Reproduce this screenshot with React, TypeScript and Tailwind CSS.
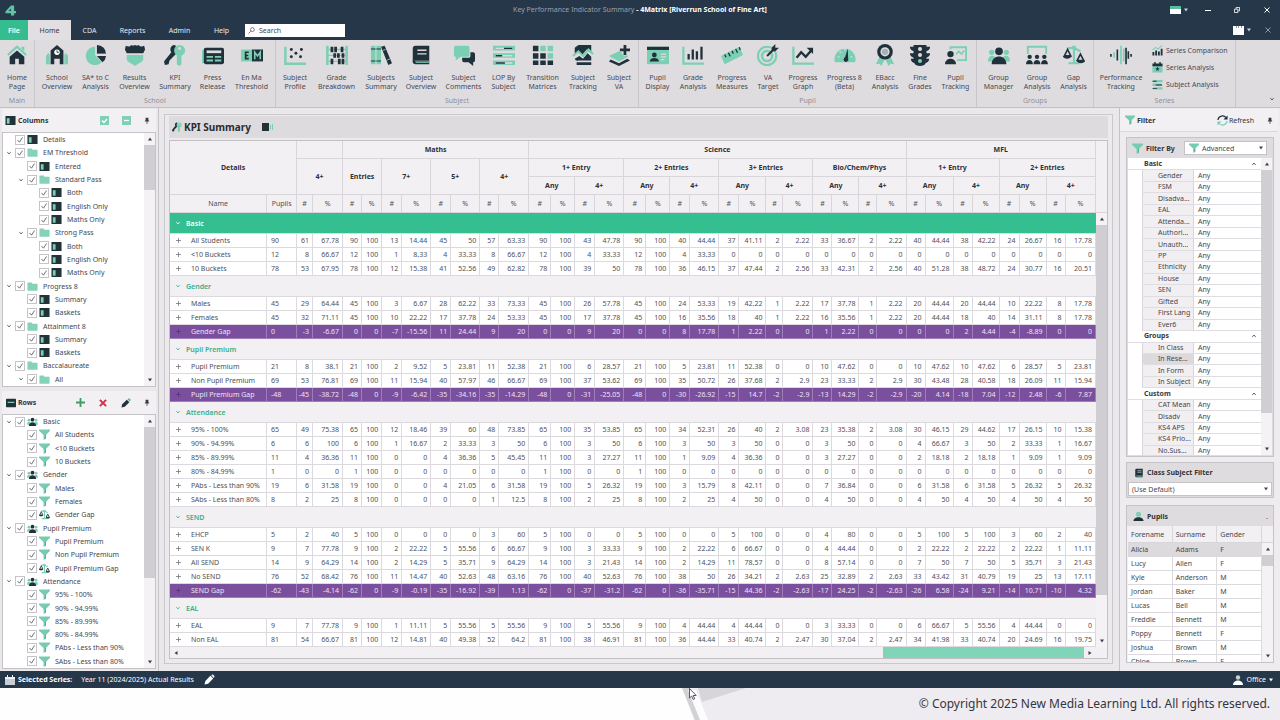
import { Fragment, useState } from "react";
import type { ReactNode } from "react";

const D = "#20313c";
const M = "#7bcfb3";

/* ---------- icons ---------- */

const ICONS: Record<string, ReactNode> = {
  home: (
    <>
      <path d="M2 12 12 3l10 9" fill="none" stroke={M} strokeWidth="2.4" />
      <path d="M17 3h3v5l-3-3z" fill={M} />
      <path d="M12 7 4 14v8h6v-6h4v6h6v-8z" fill={D} />
    </>
  ),
  school: (
    <>
      <path d="M0 12h4v10H0zM20 12h4v10h-4z" fill={M} />
      <path d="M1.500 10h2v12h-2zM20.500 10h2v12h-2z" fill={M} />
      <path d="M12 1 5 7v15h4v-6h6v6h4V7z" fill={D} />
      <circle cx="12" cy="9" r="3" fill="#fff" />
      <path d="M12 7v2h2" fill="none" stroke={D} strokeWidth="1" />
    </>
  ),
  pie: (
    <>
      <path d="M11 3a10 10 0 1 0 7 17l-7-8z" fill={M} />
      <path d="M13 1v10h10A10 10 0 0 0 13 1z" fill={D} />
      <path d="M13 13l6 7a10 10 0 0 0 4-7z" fill={D} />
      <path d="M13 11h10" stroke="#dedbdf" strokeWidth="1" />
    </>
  ),
  shield: (
    <>
      <path d="M2 2c3 1 4 1 6-1 1 1 2 1 4 0 2 1 3 1 4 0 2 2 3 2 6 1l1 4-2 4H3L1 6z" fill={D} />
      <path d="M3 12h18v4c0 4-6 5-9 8-3-3-9-4-9-8z" fill={M} />
    </>
  ),
  keys: (
    <>
      <path d="M11 1a5 5 0 0 0-3 8l-8 10 1 4 4-1 1-4 7-7V2z" fill={D} />
      <circle cx="17" cy="7" r="6" fill={M} />
      <path d="M14 10h5v12l-2 2-3-2z" fill={M} />
      <circle cx="17" cy="5" r="1.600" fill="#dedbdf" />
    </>
  ),
  press: (
    <>
      <path d="M0 7h3v14H0z" fill={M} />
      <rect x="2" y="4" width="22" height="18" rx="2" fill={D} />
      <path d="M5 7h16v3H5z" fill="#dedbdf" />
      <path d="M5 13h7v2H5zM14 13h7v2h-7zM5 17h7v2H5zM14 17h7v2h-7z" fill={M} />
    </>
  ),
  enma: (
    <>
      <path d="M0 6h12v13H0z" fill={M} />
      <path d="M12 6h12v13H12z" fill={D} />
      <path d="M8.500 9H5v7h3.500M5 12.500h3" fill="none" stroke={D} strokeWidth="1.800" />
      <path d="M15 16.500V9l3 4 3-4v7.500" fill="none" stroke={M} strokeWidth="1.800" />
    </>
  ),
  scatter: (
    <>
      <path d="M1.500 3v18.500H24" fill="none" stroke={M} strokeWidth="2.600" />
      <g fill={D}>
        <circle cx="8" cy="6" r="1.600" />
        <circle cx="13" cy="10" r="1.600" />
        <circle cx="19" cy="6" r="1.600" />
        <circle cx="8" cy="14" r="1.600" />
        <circle cx="18" cy="14" r="1.600" />
      </g>
    </>
  ),
  abacus: (
    <>
      <path d="M1.500 2v21M22.500 2v21" stroke={M} strokeWidth="2.800" />
      <path d="M2 6h20M2 12.500h20M2 19h20" stroke={M} strokeWidth="1.400" />
      <path d="M5 3h3v6H5zM9 3h3v6H9zM16 3h3v6h-3zM5 16h3v6H5zM13 16h3v6h-3zM17 16h3v6h-3zM8 10h3v5H8zM12 10h3v5h-3zM17 10h3v5h-3z" fill={D} />
    </>
  ),
  books: (
    <>
      <path d="M1 2h5v20H1zM7 2h5v20H7z" fill={M} />
      <path d="M1 5h5v1H1zM1 18h5v1H1zM7 5h5v1H7zM7 18h5v1H7z" fill={D} />
      <path d="M12 3l4-1 8 19-4 2z" fill={D} />
      <path d="M14 7l3-1M18 18l4-2" stroke={M} strokeWidth="1" />
    </>
  ),
  book: (
    <>
      <path d="M6 2h15v16H6a3 3 0 0 0-3 2V5a3 3 0 0 1 3-3z" fill={D} />
      <path d="M3 18h18v4H6a3 3 0 0 1-3-3z" fill={D} />
      <path d="M6 19h15v1.500H6z" fill={M} />
      <path d="M8 6h10v1.500H8zM8 10h10v1.500H8z" fill="#dedbdf" />
    </>
  ),
  comments: (
    <>
      <path d="M2 2h14a2 2 0 0 1 2 2v8a2 2 0 0 1-2 2H8l-5 4v-4a2 2 0 0 1-2-2V4z" fill={M} />
      <path d="M19 9h3a2 2 0 0 1 2 2v7a2 2 0 0 1-2 2v4l-5-4h-5a2 2 0 0 1-2-2v-3h7a2 2 0 0 0 2-2z" fill={D} />
    </>
  ),
  lop: (
    <>
      <path d="M0 2h24v5H0zM0 10h24v5H0zM0 18h24v5H0z" fill={M} />
      <path d="M3 4h18v1.500H3zM3 12h18v1.500H3zM3 20h18v1.500H3z" fill="#dedbdf" />
      <path d="M12 4h9v1.500h-9zM3 12h7v1.500H3zM3 20h10v1.500H3z" fill={D} />
    </>
  ),
  matrix: (
    <>
      <path d="M1 2h6v6H1zM1 10h6v6H1zM9 10h6v6H9zM1 18h6v5H1zM9 18h6v5H9zM17 18h6v5h-6z" fill={D} />
      <path d="M9 2h6v6H9zM17 2h6v6h-6zM17 10h6v6h-6z" fill={M} />
    </>
  ),
  tracking: (
    <>
      <path d="M7 1h14v9l-5-4-5 6-4-3-4 3V4z" fill={D} />
      <path d="M21 14v4H7a3 3 0 0 1-4-2l5-3 4 3 5-6zM5 20h16v3H5z" fill={D} />
      <path d="M1 13l6-5 5 5 6-7 5 5" fill="none" stroke={M} strokeWidth="2.200" />
    </>
  ),
  layers: (
    <>
      <path d="M17 1h3v4h4v3h-4v4h-3V8h-4V5h4z" fill={D} />
      <path d="M12 8h3v3l3 2 3-1 1 2-10 5L1 13z" fill={M} />
      <path d="M3 17l9 4 9-5 3 2-12 6-11-5z" fill={D} />
    </>
  ),
  idcard: (
    <>
      <path d="M0 3h24v19H0z" fill={M} />
      <path d="M0 3h24v3.500H0z" fill={D} />
      <circle cx="8" cy="12" r="2.600" fill={D} />
      <path d="M3 19c0-5 10-5 10 0z" fill={D} />
      <path d="M15 11h6M15 14h6M15 17h4" stroke="#dedbdf" strokeWidth="1.300" />
    </>
  ),
  bars: (
    <>
      <path d="M1.500 3v18.500H24" fill="none" stroke={M} strokeWidth="2.400" />
      <path d="M6 11h2.500v6H6zM10.500 6H13v11h-2.500zM15 8h2.500v9H15zM20 3h2.500v14H20z" fill={D} />
    </>
  ),
  ruler: (
    <>
      <path d="M0 13 20 3l4 9L4 22z" fill={M} />
      <path d="M4 11.500l1.500 3M8 9.500l2 4M12 7.500l1.500 3M16 5.500l2 4M20 3.500l1 3" stroke={D} strokeWidth="1.400" />
    </>
  ),
  target: (
    <>
      <circle cx="11" cy="13" r="10" fill="none" stroke={M} strokeWidth="2.400" />
      <circle cx="11" cy="13" r="5.500" fill="none" stroke={M} strokeWidth="2.800" />
      <path d="M11 13 18 6" stroke={D} strokeWidth="2.200" />
      <path d="M16 8V4l4-4v4h4l-4 4z" fill={D} />
    </>
  ),
  graph: (
    <>
      <path d="M1.500 3v18.500H24" fill="none" stroke={M} strokeWidth="2.400" />
      <path d="M5 15l5-6 5 5 6-7" fill="none" stroke={D} strokeWidth="2.600" />
      <path d="M16 4h7v7z" fill={D} />
    </>
  ),
  gauge: (
    <>
      <path d="M1 20a11.500 11.500 0 1 1 22 0z" fill={M} />
      <path d="M11 18l4-13 .5 13z" fill={D} />
      <circle cx="13" cy="17" r="2.500" fill={D} />
      <path d="M4 14h2M6 8l1.500 1.500M12 5v2M20 14h-2" stroke="#dedbdf" strokeWidth="1.400" />
    </>
  ),
  rosette: (
    <>
      <path d="M6 14 2 22l4-.5 2 2.500 4-8 4 8 2-2.500 4 .5-4-8z" fill={M} />
      <circle cx="12" cy="8.500" r="8.500" fill={D} />
      <circle cx="12" cy="8.500" r="5" fill="#dedbdf" />
      <circle cx="12" cy="8.500" r="3.400" fill="#9fb4b4" />
    </>
  ),
  lights: (
    <>
      <path d="M5 1h14v2h4c0 3-2 4-4 5v2h4c0 3-2 4-4 5v1h3c0 3-2 4-4 5-1 4-11 4-12 0-2-1-4-2-4-5h3v-1c-2-1-4-2-4-5h4V8C3 7 1 6 1 3h4z" fill={D} />
      <circle cx="12" cy="5.500" r="2.200" fill="#dedbdf" />
      <circle cx="12" cy="12" r="2.200" fill="#dedbdf" />
      <circle cx="12" cy="18.500" r="2.200" fill={M} />
    </>
  ),
  teach: (
    <>
      <path d="M6 6V3.500h17v14H13" fill="none" stroke={M} strokeWidth="2" />
      <path d="M12 11l3-3 3 3 3-4" fill="none" stroke={M} strokeWidth="1.800" />
      <circle cx="6" cy="11" r="3.500" fill={D} />
      <path d="M0 22c0-8 12-8 12 0z" fill={D} />
    </>
  ),
  groupManager: (
    <>
      <circle cx="4" cy="9" r="2.800" fill={M} />
      <circle cx="20" cy="9" r="2.800" fill={M} />
      <path d="M0 19c0-8 7-7 8-4v4zM24 19c0-8-7-7-8-4v4z" fill={M} />
      <circle cx="12" cy="8" r="4.200" fill={D} />
      <path d="M4 22c0-11 16-11 16 0z" fill={D} />
    </>
  ),
  groupAnalysis: (
    <>
      <path d="M2 11V3h20v8" fill="none" stroke={M} strokeWidth="2" />
      <g fill={D}>
        <circle cx="4" cy="14" r="2.400" />
        <circle cx="12" cy="14" r="2.400" />
        <circle cx="20" cy="14" r="2.400" />
        <path d="M0 22c0-6 7.500-6 7.500 0zM8.200 22c0-6 7.500-6 7.500 0zM16.400 22c0-6 7.500-6 7.500 0z" />
      </g>
    </>
  ),
  scales: (
    <>
      <path d="M12 3v17M6 21h12M4 5l7-1 8 4" fill="none" stroke={M} strokeWidth="2.400" />
      <circle cx="12" cy="4" r="2.400" fill={M} />
      <path d="M5 6 1.500 13h7zM19 11l-3.500 7h7z" fill="none" stroke={D} strokeWidth="1.800" />
      <path d="M0 13h9c0 4-9 4-9 0zM15 18h9c0 4-9 4-9 0z" fill={D} />
    </>
  ),
  wave: (
    <>
      <path d="M1 11v3M23 11v3M8 6v12M20 8v8" stroke={D} strokeWidth="1.800" />
      <path d="M4.500 9v6M12 2v20M15 5v14" stroke={M} strokeWidth="1.800" />
      <path d="M17.500 4v18" stroke={D} strokeWidth="1.800" />
    </>
  ),
  comparison: (
    <>
      <path d="M1 11 8 5l5 4 9-8" fill="none" stroke={M} strokeWidth="2.200" />
      <path d="M1 15h4v8H1zM7 12h4v11H7zM13 14h4v9h-4zM19 8h4v15h-4z" fill={D} />
    </>
  ),
  calendar: (
    <>
      <path d="M1 8h22v15H1z" fill={M} />
      <path d="M1 3h22v6H1zM5 0h3v4H5zM16 0h3v4h-3z" fill={D} />
      <path d="m12 10 1.500 3.500H17l-3 2.300 1 3.700-3-2-3 2 1-3.700-3-2.300h3.500z" fill={D} />
    </>
  ),
  subjectRows: (
    <>
      <path d="M3 2h20v5H3zM1 10h20v5H1zM3 18h20v5H3z" fill={M} />
      <path d="M1 4h9v2H1zM8 12h14v2H8zM1 20h10v2H1z" fill={D} />
    </>
  ),
  column: (
    <>
      <rect x="1" y="2" width="22" height="20" rx="1" fill="#213338" />
      <path d="M4 7h6v12H4z" fill={M} />
    </>
  ),
  rowsPanel: (
    <>
      <rect x="0" y="2" width="24" height="20" rx="1" fill="#213338" />
      <path d="M4 9h16v3H4z" fill={M} />
    </>
  ),
  folder: <path d="M1 3h9l2 3h11v15H1z" fill="#84d3b8" />,
  funnel: (
    <>
      <path d="M0 1h24v3l-9 9v8l-5 3V13L0 4z" fill="#76cbb0" />
      <path d="M15 13v8l-2 1V12z" fill="#4fae93" />
    </>
  ),
  pupil: (
    <>
      <circle cx="12" cy="7" r="5.500" fill={M} />
      <path d="M1 22c0-11 22-11 22 0z" fill={D} />
    </>
  ),
  refresh: (
    <>
      <path d="M2 11A10 10 0 0 1 20 6" fill="none" stroke={D} strokeWidth="2.600" />
      <path d="M23 1v9h-9z" fill={D} />
      <path d="M22 13A10 10 0 0 1 4 18" fill="none" stroke={M} strokeWidth="2.600" />
      <path d="M1 23v-9h9z" fill={M} />
    </>
  ),
};

function Icon({ name, className }: { name: string; className: string }) {
  return (
    <svg viewBox="0 0 24 24" className={`shrink-0 ${className}`} aria-hidden="true">
      {ICONS[name]}
    </svg>
  );
}

function Chevron({ up = false, className = "" }: { up?: boolean; className?: string }) {
  return (
    <svg viewBox="0 0 6 6" className={`h-[6px] w-[6px] shrink-0 ${className}`} aria-hidden="true">
      <path d={up ? "M1.300 3.800 3 2.200l1.700 1.600" : "M1.300 2.200 3 3.800l1.700-1.600"} fill="none" stroke="currentColor" strokeWidth=".9" />
    </svg>
  );
}

function Arrow({ dir, className = "" }: { dir: "up" | "down" | "left" | "right"; className?: string }) {
  const shapes = { up: "M1 4.500h4L3 1.500z", down: "M1 1.500h4L3 4.500z", left: "M4.500 1v4L1.500 3z", right: "M1.500 1v4l3-2z" };
  return (
    <svg viewBox="0 0 6 6" className={`h-[6px] w-[6px] shrink-0 ${className}`} aria-hidden="true">
      <path d={shapes[dir]} fill="currentColor" />
    </svg>
  );
}

function Pin() {
  return (
    <button aria-label="Pin panel" className="text-[#3b3b42]">
      <svg viewBox="0 0 8 10" className="h-[7px] w-[6px]">
        <path d="M2 1h4v4h1v1.500H1V5h1zM3.500 6.500h1V10h-1z" fill="currentColor" />
      </svg>
    </button>
  );
}

function Pencil({ className, tip, body }: { className: string; tip: string; body: string }) {
  return (
    <svg viewBox="0 0 24 24" className={className} aria-hidden="true">
      <path d="M1 23l2-8L14 4l6 6L9 21z" fill={body} />
      <path d="M15.500 3 18 1c2-1 6 3 5 5l-2 2.500z" fill={tip} />
    </svg>
  );
}

/* ---------- title bar and tabs ---------- */

function TitleBar() {
  return (
    <header className="relative flex h-[20px] items-center justify-between pr-[10px] pl-[5px]">
      <svg viewBox="0 0 24 24" className="h-[11px] w-[11px]" aria-label="4Matrix logo">
        <path d="M13 1h7v12h4v5h-4v5h-7v-5H1v-4zM13 8l-5 5h5z" fill="#5fc3a5" fillRule="evenodd" />
      </svg>
      <h1 className="absolute inset-x-0 text-center text-[7px] leading-[20px] font-normal text-[#98a1ae]">
        Key Performance Indicator Summary <strong className="font-bold text-white">- 4Matrix [Riverrun School of Fine Art]</strong>
      </h1>
      <div className="relative flex items-center text-white">
        <button aria-label="Layout" className="flex items-center gap-[2px]">
          <svg viewBox="0 0 11 8" className="h-[8px] w-[11px]">
            <path d="M0 0h11v8H0z" fill="#fff" />
            <path d="M0 0h11v3H0z" fill="#5cb9a0" />
          </svg>
          <Arrow dir="down" className="text-[#c8ced6]" />
        </button>
        <button aria-label="Minimise" className="mb-[4px] ml-[16px] h-[5px] w-[6px] border-b border-white" />
        <button aria-label="Restore" className="ml-[23px]">
          <svg viewBox="0 0 7 7" className="h-[6px] w-[6px]" fill="none" stroke="currentColor">
            <path d="M.5 2.500h4v4h-4zM2.500 2V.5h4v4H5" />
          </svg>
        </button>
        <button aria-label="Close" className="ml-[24px]">
          <svg viewBox="0 0 6 6" className="h-[6px] w-[6px]" stroke="currentColor">
            <path d="M.5.5l5 5M5.500.5l-5 5" />
          </svg>
        </button>
      </div>
    </header>
  );
}

function Tabs() {
  const tabs = [
    { label: "CDA", w: "w-[37px]" },
    { label: "Reports", w: "w-[49px]" },
    { label: "Admin", w: "w-[45px]" },
    { label: "Help", w: "w-[39px]" },
  ];
  return (
    <nav className="flex h-[20px] items-center pr-[9px] text-[7px] text-[#e6e9ed]">
      <button className="h-full w-[28px] bg-[#35bd90] font-semibold text-white">File</button>
      <button className="h-full w-[43px] bg-[#e2dfe3] text-[#36383f]">Home</button>
      {tabs.map((t) => (
        <button key={t.label} className={`h-full ${t.w}`}>
          {t.label}
        </button>
      ))}
      <label className="ml-[4px] flex h-[13px] w-[100px] items-center bg-white pl-[3px]">
        <svg viewBox="0 0 8 8" className="h-[7px] w-[7px] shrink-0" fill="none" stroke="#44464e">
          <circle cx="5" cy="3" r="2.200" strokeWidth=".8" />
          <path d="M3.300 4.700.5 7.500" strokeWidth=".8" />
        </svg>
        <input
          aria-label="Search"
          placeholder="Search"
          className="ml-[4px] h-full w-full min-w-0 bg-transparent text-[7px] outline-none placeholder:text-[#44464e]"
        />
      </label>
      <div className="ml-auto flex items-center">
        <button aria-label="Window list" className="flex items-center gap-[2px]">
          <svg viewBox="0 0 11 9" className="h-[9px] w-[11px]">
            <path d="M0 0h11v9H0z" fill="#fff" />
            <path d="M3 1h1M5 1h1M8 1h1" stroke="#27374a" />
          </svg>
          <Arrow dir="down" className="text-[#c8ced6]" />
        </button>
        <button aria-label="Close view" className="ml-[13px] text-[#8e98a6]">
          <svg viewBox="0 0 6 6" className="h-[6px] w-[6px]" stroke="currentColor">
            <path d="M.5.5l5 5M5.500.5l-5 5" />
          </svg>
        </button>
      </div>
    </nav>
  );
}

/* ---------- ribbon ---------- */

type Item = { icon: string; lines: [string, string]; w: string };

const RIBBON: { label: string; w: string; items: Item[] }[] = [
  { label: "Main", w: "w-[35px]", items: [{ icon: "home", lines: ["Home", "Page"], w: "w-[34px]" }] },
  {
    label: "School",
    w: "w-[241px]",
    items: [
      { icon: "school", lines: ["School", "Overview"], w: "w-[40px]" },
      { icon: "pie", lines: ["SA* to C", "Analysis"], w: "w-[37px]" },
      { icon: "shield", lines: ["Results", "Overview"], w: "w-[41px]" },
      { icon: "keys", lines: ["KPI", "Summary"], w: "w-[40px]" },
      { icon: "press", lines: ["Press", "Release"], w: "w-[35px]" },
      { icon: "enma", lines: ["En Ma", "Threshold"], w: "w-[43px]" },
    ],
  },
  {
    label: "Subject",
    w: "w-[363px]",
    items: [
      { icon: "scatter", lines: ["Subject", "Profile"], w: "w-[34px]" },
      { icon: "abacus", lines: ["Grade", "Breakdown"], w: "w-[49px]" },
      { icon: "books", lines: ["Subjects", "Summary"], w: "w-[40px]" },
      { icon: "book", lines: ["Subject", "Overview"], w: "w-[40px]" },
      { icon: "comments", lines: ["Subject", "Comments"], w: "w-[45px]" },
      { icon: "lop", lines: ["LOP By", "Subject"], w: "w-[35px]" },
      { icon: "matrix", lines: ["Transition", "Matrices"], w: "w-[43px]" },
      { icon: "tracking", lines: ["Subject", "Tracking"], w: "w-[38px]" },
      { icon: "layers", lines: ["Subject", "VA"], w: "w-[34px]" },
    ],
  },
  {
    label: "Pupil",
    w: "w-[338px]",
    items: [
      { icon: "idcard", lines: ["Pupil", "Display"], w: "w-[34px]" },
      { icon: "bars", lines: ["Grade", "Analysis"], w: "w-[37px]" },
      { icon: "ruler", lines: ["Progress", "Measures"], w: "w-[41px]" },
      { icon: "target", lines: ["VA", "Target"], w: "w-[31px]" },
      { icon: "graph", lines: ["Progress", "Graph"], w: "w-[39px]" },
      { icon: "gauge", lines: ["Progress 8", "(Beta)"], w: "w-[44px]" },
      { icon: "rosette", lines: ["EBacc", "Analysis"], w: "w-[37px]" },
      { icon: "lights", lines: ["Fine", "Grades"], w: "w-[33px]" },
      { icon: "teach", lines: ["Pupil", "Tracking"], w: "w-[38px]" },
    ],
  },
  {
    label: "Groups",
    w: "w-[117px]",
    items: [
      { icon: "groupManager", lines: ["Group", "Manager"], w: "w-[40px]" },
      { icon: "groupAnalysis", lines: ["Group", "Analysis"], w: "w-[37px]" },
      { icon: "scales", lines: ["Gap", "Analysis"], w: "w-[36px]" },
    ],
  },
  {
    label: "Series",
    w: "w-[142px]",
    items: [{ icon: "wave", lines: ["Performance", "Tracking"], w: "w-[54px]" }],
  },
];

const SERIES_LINKS = [
  { icon: "comparison", label: "Series Comparison" },
  { icon: "calendar", label: "Series Analysis" },
  { icon: "subjectRows", label: "Subject Analysis" },
];

function Ribbon() {
  return (
    <div className="flex h-[68px] border-b border-[#c3c0c4] bg-[#dfdce0] text-[7px] text-[#484950]">
      {RIBBON.map((group) => (
        <section key={group.label} className={`flex shrink-0 flex-col border-r border-[#c9c6cb] pt-[4px] ${group.w}`}>
          <div className="flex h-[52px] justify-center">
            {group.items.map((item) => (
              <button key={item.lines.join(" ")} className={`flex shrink-0 flex-col items-center ${item.w}`}>
                <Icon name={item.icon} className="h-[22px] w-[22px]" />
                <span className="mt-[7px] text-center leading-[9px] whitespace-nowrap">
                  {item.lines[0]}
                  <br />
                  {item.lines[1]}
                </span>
              </button>
            ))}
            {group.label === "Series" && (
              <ul className="flex grow flex-col gap-[5px] pl-[4px]">
                {SERIES_LINKS.map((link) => (
                  <li key={link.label}>
                    <button className="flex h-[12px] items-center gap-[3px] whitespace-nowrap">
                      <Icon name={link.icon} className="h-[11px] w-[11px]" />
                      {link.label}
                    </button>
                  </li>
                ))}
              </ul>
            )}
          </div>
          <span className="text-center leading-[9px] text-[#918f96]">{group.label}</span>
        </section>
      ))}
      <button aria-label="Collapse ribbon" className="mt-auto mr-[5px] mb-[5px] ml-auto">
        <Chevron className="text-[#3b3b42]" />
      </button>
    </div>
  );
}

/* ---------- shared bits ---------- */

function VScroll({ thumb, className = "" }: { thumb: string; className?: string }) {
  return (
    <div className={`flex w-[11px] shrink-0 flex-col items-center bg-[#f4f2f5] text-[#3d3d44] ${className}`}>
      <Arrow dir="up" className="my-[3px]" />
      <div className="w-full flex-1">
        <div className={`w-full bg-[#d0ced2] ${thumb}`} />
      </div>
      <Arrow dir="down" className="my-[3px]" />
    </div>
  );
}

function Check({ label }: { label: string }) {
  return (
    <span className="grid h-[10px] w-[10px] shrink-0">
      <input
        type="checkbox"
        defaultChecked
        aria-label={label}
        className="peer col-start-1 row-start-1 h-[10px] w-[10px] appearance-none border border-[#c6c3c9] bg-white"
      />
      <svg viewBox="0 0 10 10" className="pointer-events-none invisible col-start-1 row-start-1 peer-checked:visible">
        <path d="M2.500 5l2 2.200L7.500 2.500" fill="none" stroke="#4a4a50" strokeWidth=".8" />
      </svg>
    </span>
  );
}

type Node = [level: number, icon: string, label: string];

const COLUMN_TREE: Node[] = [
  [0, "column", "Details"],
  [0, "folder", "EM Threshold"],
  [1, "column", "Entered"],
  [1, "folder", "Standard Pass"],
  [2, "column", "Both"],
  [2, "column", "English Only"],
  [2, "column", "Maths Only"],
  [1, "folder", "Strong Pass"],
  [2, "column", "Both"],
  [2, "column", "English Only"],
  [2, "column", "Maths Only"],
  [0, "folder", "Progress 8"],
  [1, "column", "Summary"],
  [1, "column", "Baskets"],
  [0, "folder", "Attainment 8"],
  [1, "column", "Summary"],
  [1, "column", "Baskets"],
  [0, "folder", "Baccalaureate"],
  [1, "folder", "All"],
];

const ROW_TREE: Node[] = [
  [0, "groupManager", "Basic"],
  [1, "funnel", "All Students"],
  [1, "funnel", "<10 Buckets"],
  [1, "funnel", "10 Buckets"],
  [0, "groupManager", "Gender"],
  [1, "funnel", "Males"],
  [1, "funnel", "Females"],
  [1, "scales", "Gender Gap"],
  [0, "groupManager", "Pupil Premium"],
  [1, "funnel", "Pupil Premium"],
  [1, "funnel", "Non Pupil Premium"],
  [1, "scales", "Pupil Premium Gap"],
  [0, "groupManager", "Attendance"],
  [1, "funnel", "95% - 100%"],
  [1, "funnel", "90% - 94.99%"],
  [1, "funnel", "85% - 89.99%"],
  [1, "funnel", "80% - 84.99%"],
  [1, "funnel", "PAbs - Less than 90%"],
  [1, "funnel", "SAbs - Less than 80%"],
];

const INDENT = ["pl-[3px]", "pl-[15px]", "pl-[27px]"];

function Tree({ nodes, thumb }: { nodes: Node[]; thumb: string }) {
  return (
    <div className="flex min-h-0 flex-1 border border-[#c6c3c8] bg-white">
      <ul className="flex min-h-0 min-w-0 flex-1 flex-col">
        {nodes.map(([level, icon, label], i) => (
          <li key={i} className={`flex min-h-0 flex-1 items-center ${INDENT[level]}`}>
            <span className="flex w-[9px] shrink-0">
              {(icon === "folder" || icon === "groupManager") && <Chevron className="text-[#4a4a50]" />}
            </span>
            <Check label={label} />
            <Icon name={icon} className="ml-[2px] h-[11px] w-[11px]" />
            <span className="ml-[5px] leading-[9px] whitespace-nowrap">{label}</span>
          </li>
        ))}
      </ul>
      <VScroll thumb={thumb} />
    </div>
  );
}

function LeftSide() {
  return (
    <aside className="flex w-[159px] shrink-0 flex-col gap-[4px] border-r border-[#c6c3c8] px-[2px] pt-px pb-[2px]">
      <section className="flex min-h-0 flex-1 flex-col bg-[#f2f0f3]">
        <div className="flex h-[23px] shrink-0 items-center pr-[6px] pl-[3px]">
          <Icon name="column" className="h-[11px] w-[11px]" />
          <h2 className="ml-[2px] font-bold text-[#33343a]">Columns</h2>
          <button aria-label="Tick all" className="ml-auto h-[9px] w-[9px] bg-[#7fd1b5]">
            <svg viewBox="0 0 9 9">
              <path d="M2 4.500 4 6.500 7 3" fill="none" stroke="#fff" strokeWidth="1.300" />
            </svg>
          </button>
          <button aria-label="Untick all" className="ml-[13px] h-[9px] w-[9px] bg-[#7fd1b5]">
            <svg viewBox="0 0 9 9">
              <path d="M2 4.500h5" stroke="#fff" strokeWidth="1.300" />
            </svg>
          </button>
          <span className="ml-[13px] flex">
            <Pin />
          </span>
        </div>
        <Tree nodes={COLUMN_TREE} thumb="h-[45px]" />
      </section>
      <section className="flex min-h-0 flex-1 flex-col bg-[#f2f0f3]">
        <div className="flex h-[23px] shrink-0 items-center pr-[6px] pl-[4px]">
          <Icon name="rowsPanel" className="h-[10px] w-[10px]" />
          <h2 className="ml-[2px] font-bold text-[#33343a]">Rows</h2>
          <button aria-label="Add row" className="ml-auto">
            <svg viewBox="0 0 10 10" className="h-[9px] w-[9px]">
              <path d="M4 0h2v4h4v2H6v4H4V6H0V4h4z" fill="#3f9c62" />
            </svg>
          </button>
          <button aria-label="Delete row" className="ml-[14px]">
            <svg viewBox="0 0 9 9" className="h-[8px] w-[8px]">
              <path d="M1 1l7 7M8 1 1 8" stroke="#cf2f4a" strokeWidth="2.200" />
            </svg>
          </button>
          <button aria-label="Edit row" className="ml-[14px]">
            <Pencil className="h-[10px] w-[10px]" body={D} tip="#5cb98a" />
          </button>
          <span className="ml-[13px] flex">
            <Pin />
          </span>
        </div>
        <Tree nodes={ROW_TREE} thumb="h-[151px]" />
      </section>
    </aside>
  );
}

/* ---------- KPI table ---------- */

const COL_WIDTHS = [
  "w-[97px]", "w-[30px]",
  "w-[16px]", "w-[30px]",
  "w-[19px]", "w-[20px]", "w-[20px]", "w-[29px]", "w-[20px]", "w-[29px]", "w-[19px]", "w-[30px]",
  "w-[22px]", "w-[24px]", "w-[20px]", "w-[29px]", "w-[22px]", "w-[24px]", "w-[20px]", "w-[29px]",
  "w-[20px]", "w-[27px]", "w-[17px]", "w-[30px]", "w-[19px]", "w-[27px]", "w-[18px]", "w-[29px]",
  "w-[19px]", "w-[28px]", "w-[19px]", "w-[27px]", "w-[20px]", "w-[27px]", "w-[19px]", "w-[30px]",
];

type Group = { name: string; rows: [name: string, pupils: number, values: string][] };

const GROUPS: Group[] = [
  {
    name: "Basic",
    rows: [
      ["All Students", 90, "61 67.78 90 100 13 14.44 45 50 57 63.33 90 100 43 47.78 90 100 40 44.44 37 41.11 2 2.22 33 36.67 2 2.22 40 44.44 38 42.22 24 26.67 16 17.78"],
      ["<10 Buckets", 12, "8 66.67 12 100 1 8.33 4 33.33 8 66.67 12 100 4 33.33 12 100 4 33.33 0 0 0 0 0 0 0 0 0 0 0 0 0 0 0 0"],
      ["10 Buckets", 78, "53 67.95 78 100 12 15.38 41 52.56 49 62.82 78 100 39 50 78 100 36 46.15 37 47.44 2 2.56 33 42.31 2 2.56 40 51.28 38 48.72 24 30.77 16 20.51"],
    ],
  },
  {
    name: "Gender",
    rows: [
      ["Males", 45, "29 64.44 45 100 3 6.67 28 62.22 33 73.33 45 100 26 57.78 45 100 24 53.33 19 42.22 1 2.22 17 37.78 1 2.22 20 44.44 20 44.44 10 22.22 8 17.78"],
      ["Females", 45, "32 71.11 45 100 10 22.22 17 37.78 24 53.33 45 100 17 37.78 45 100 16 35.56 18 40 1 2.22 16 35.56 1 2.22 20 44.44 18 40 14 31.11 8 17.78"],
      ["Gender Gap", 0, "-3 -6.67 0 0 -7 -15.56 11 24.44 9 20 0 0 9 20 0 0 8 17.78 1 2.22 0 0 1 2.22 0 0 0 0 2 4.44 -4 -8.89 0 0"],
    ],
  },
  {
    name: "Pupil Premium",
    rows: [
      ["Pupil Premium", 21, "8 38.1 21 100 2 9.52 5 23.81 11 52.38 21 100 6 28.57 21 100 5 23.81 11 52.38 0 0 10 47.62 0 0 10 47.62 10 47.62 6 28.57 5 23.81"],
      ["Non Pupil Premium", 69, "53 76.81 69 100 11 15.94 40 57.97 46 66.67 69 100 37 53.62 69 100 35 50.72 26 37.68 2 2.9 23 33.33 2 2.9 30 43.48 28 40.58 18 26.09 11 15.94"],
      ["Pupil Premium Gap", -48, "-45 -38.72 -48 0 -9 -6.42 -35 -34.16 -35 -14.29 -48 0 -31 -25.05 -48 0 -30 -26.92 -15 14.7 -2 -2.9 -13 14.29 -2 -2.9 -20 4.14 -18 7.04 -12 2.48 -6 7.87"],
    ],
  },
  {
    name: "Attendance",
    rows: [
      ["95% - 100%", 65, "49 75.38 65 100 12 18.46 39 60 48 73.85 65 100 35 53.85 65 100 34 52.31 26 40 2 3.08 23 35.38 2 3.08 30 46.15 29 44.62 17 26.15 10 15.38"],
      ["90% - 94.99%", 6, "6 100 6 100 1 16.67 2 33.33 3 50 6 100 3 50 6 100 3 50 3 50 0 0 3 50 0 0 4 66.67 3 50 2 33.33 1 16.67"],
      ["85% - 89.99%", 11, "4 36.36 11 100 0 0 4 36.36 5 45.45 11 100 3 27.27 11 100 1 9.09 4 36.36 0 0 3 27.27 0 0 2 18.18 2 18.18 1 9.09 1 9.09"],
      ["80% - 84.99%", 1, "0 0 1 100 0 0 0 0 0 0 1 100 0 0 1 100 0 0 0 0 0 0 0 0 0 0 0 0 0 0 0 0 0 0"],
      ["PAbs - Less than 90%", 19, "6 31.58 19 100 0 0 4 21.05 6 31.58 19 100 5 26.32 19 100 3 15.79 8 42.11 0 0 7 36.84 0 0 6 31.58 6 31.58 5 26.32 5 26.32"],
      ["SAbs - Less than 80%", 8, "2 25 8 100 0 0 0 0 1 12.5 8 100 2 25 8 100 2 25 4 50 0 0 4 50 0 0 4 50 4 50 4 50 4 50"],
    ],
  },
  {
    name: "SEND",
    rows: [
      ["EHCP", 5, "2 40 5 100 0 0 0 0 3 60 5 100 0 0 5 100 0 0 5 100 0 0 4 80 0 0 5 100 5 100 3 60 2 40"],
      ["SEN K", 9, "7 77.78 9 100 2 22.22 5 55.56 6 66.67 9 100 3 33.33 9 100 2 22.22 6 66.67 0 0 4 44.44 0 0 2 22.22 2 22.22 2 22.22 1 11.11"],
      ["All SEND", 14, "9 64.29 14 100 2 14.29 5 35.71 9 64.29 14 100 3 21.43 14 100 2 14.29 11 78.57 0 0 8 57.14 0 0 7 50 7 50 5 35.71 3 21.43"],
      ["No SEND", 76, "52 68.42 76 100 11 14.47 40 52.63 48 63.16 76 100 40 52.63 76 100 38 50 26 34.21 2 2.63 25 32.89 2 2.63 33 43.42 31 40.79 19 25 13 17.11"],
      ["SEND Gap", -62, "-43 -4.14 -62 0 -9 -0.19 -35 -16.92 -39 1.13 -62 0 -37 -31.2 -62 0 -36 -35.71 -15 44.36 -2 -2.63 -17 24.25 -2 -2.63 -26 6.58 -24 9.21 -14 10.71 -10 4.32"],
    ],
  },
  {
    name: "EAL",
    rows: [
      ["EAL", 9, "7 77.78 9 100 1 11.11 5 55.56 5 55.56 9 100 5 55.56 9 100 4 44.44 4 44.44 0 0 3 33.33 0 0 6 66.67 5 55.56 4 44.44 0 0"],
      ["Non EAL", 81, "54 66.67 81 100 12 14.81 40 49.38 52 64.2 81 100 38 46.91 81 100 36 44.44 33 40.74 2 2.47 30 37.04 2 2.47 34 41.98 33 40.74 20 24.69 16 19.75"],
    ],
  },
];

const TH = "border-r border-b border-[#d9d6db] p-0 font-bold text-[#2f3036]";

function KpiTable() {
  const [selected, setSelected] = useState("Basic");
  return (
    <table className="w-full table-fixed border-separate border-spacing-0 text-[7px] leading-[13px] whitespace-nowrap text-[#505058]">
      <colgroup>
        {COL_WIDTHS.map((w, i) => (
          <col key={i} className={w} />
        ))}
      </colgroup>
      <thead className="bg-[#f2f0f3]">
        <tr className="h-[18px]">
          <th colSpan={2} rowSpan={3} className={TH}>Details</th>
          <th colSpan={2} className={TH} />
          <th colSpan={8} className={TH}>Maths</th>
          <th colSpan={16} className={TH}>Science</th>
          <th colSpan={8} className={TH}>MFL</th>
        </tr>
        <tr className="h-[18px]">
          <th colSpan={2} rowSpan={2} className={TH}>4+</th>
          {["Entries", "7+", "5+", "4+"].map((t) => (
            <th key={t} colSpan={2} rowSpan={2} className={TH}>{t}</th>
          ))}
          {["1+ Entry", "2+ Entries", "3+ Entries", "Bio/Chem/Phys", "1+ Entry", "2+ Entries"].map((t, i) => (
            <th key={i} colSpan={4} className={TH}>{t}</th>
          ))}
        </tr>
        <tr className="h-[18px]">
          {Array.from({ length: 12 }).map((_, i) => (
            <th key={i} colSpan={2} className={TH}>{i % 2 ? "4+" : "Any"}</th>
          ))}
        </tr>
        <tr className="h-[18px] text-[#505058]">
          <th className="border-r border-b border-[#d9d6db] p-0 font-normal">Name</th>
          <th className="border-r border-b border-[#d9d6db] p-0 font-normal">Pupils</th>
          {Array.from({ length: 34 }).map((_, i) => (
            <th key={i} className="border-r border-b border-[#d9d6db] p-0 font-normal">{i % 2 ? "%" : "#"}</th>
          ))}
        </tr>
      </thead>
      <tbody>
        {GROUPS.map((g) => {
          const on = g.name === selected;
          return (
            <Fragment key={g.name}>
              <tr
                onClick={() => setSelected(g.name)}
                className={`h-[21px] cursor-pointer ${on ? "bg-[#35be90] text-white" : "bg-[#f2f0f3] text-[#3aae8b]"}`}
              >
                <td colSpan={36} className="border-b border-[#dddadf] p-0">
                  <span className="flex items-center gap-[5px] pl-[5px] font-semibold">
                    <Chevron />
                    {g.name}
                  </span>
                </td>
              </tr>
              {g.rows.map(([name, pupils, values]) => {
                const gap = name.endsWith("Gap");
                const line = gap ? "border-[#9d7dba]" : "border-[#dddadf]";
                return (
                  <tr key={name} className={`h-[14px] ${gap ? "bg-[#7a4f9e] text-[#ece2f4]" : "bg-white"}`}>
                    <td className={`border-r border-b p-0 ${line}`}>
                      <span className="flex items-center gap-[9px] pl-[5px]">
                        <svg viewBox="0 0 7 7" className="h-[7px] w-[7px] shrink-0" aria-hidden="true">
                          <path d="M3.500 1v5M1 3.500h5" stroke={gap ? "#55307a" : "#66666e"} strokeWidth=".7" />
                        </svg>
                        {name}
                      </span>
                    </td>
                    <td className={`border-r border-b p-0 pl-[4px] ${line}`}>{pupils}</td>
                    {values.split(" ").map((v, i) => (
                      <td key={i} className={`border-r border-b p-0 pr-[3px] text-right ${line}`}>{v}</td>
                    ))}
                  </tr>
                );
              })}
            </Fragment>
          );
        })}
      </tbody>
    </table>
  );
}

function KpiPanel() {
  return (
    <main className="flex min-w-0 flex-1 flex-col pt-[6px] pr-[6px] pb-[7px] pl-[5px]">
      <div className="flex min-h-0 flex-1 flex-col border border-[#cbc8cd] bg-[#eceaed] p-[4px] pt-px">
        <div className="flex h-[22px] shrink-0 items-center bg-[#dddbde] pl-[3px]">
          <Icon name="keys" className="h-[10px] w-[10px]" />
          <h2 className="ml-[2px] text-[10px] leading-[14px] font-bold text-[#2b2c31]">KPI Summary</h2>
          <button aria-label="Watch help video" className="ml-[11px]">
            <svg viewBox="0 0 11 8" className="h-[8px] w-[11px]">
              <path d="M0 0h7v8H0z" fill="#263038" />
              <path d="M8 1.500h1v5H8zM10 1h1v6h-1z" fill={M} />
            </svg>
          </button>
        </div>
        <div className="mt-[2px] flex min-h-0 flex-1 flex-col border border-[#c3c0c5] bg-[#f2f0f3]">
          <div className="flex min-h-0 flex-1">
            <div className="min-w-0 flex-1 overflow-hidden">
              <KpiTable />
            </div>
            <div className="flex w-[11px] shrink-0 flex-col">
              <div className="h-[72px] border-b border-[#d9d6db]" />
              <VScroll thumb="h-[370px]" className="flex-1" />
            </div>
          </div>
          <div className="flex h-[11px] shrink-0 items-center pr-[14px] pl-[3px] text-[#3d3d44]">
            <Arrow dir="left" />
            <div className="ml-auto h-full w-[201px] bg-[#80d4b8]" />
            <Arrow dir="right" className="ml-[3px]" />
          </div>
        </div>
      </div>
    </main>
  );
}

/* ---------- filter side ---------- */

const FILTERS: { title: string; fields: string[] }[] = [
  {
    title: "Basic",
    fields: ["Gender", "FSM", "Disadva...", "EAL", "Attenda...", "Authori...", "Unauth...", "PP", "Ethnicity", "House", "SEN", "Gifted", "First Lang", "Ever6"],
  },
  { title: "Groups", fields: ["In Class", "In Rese...", "In Form", "In Subject"] },
  { title: "Custom", fields: ["CAT Mean", "Disadv", "KS4 APS", "KS4 Prio...", "No.Sus..."] },
];

const PUPILS = [
  ["Alicia", "Adams", "F"],
  ["Lucy", "Allen", "F"],
  ["Kyle", "Anderson", "M"],
  ["Jordan", "Baker", "M"],
  ["Lucas", "Bell", "M"],
  ["Freddie", "Bennett", "M"],
  ["Poppy", "Bennett", "F"],
  ["Joshua", "Brown", "M"],
  ["Chloe", "Brown", "F"],
];

function FilterGrid() {
  return (
    <div className="flex min-h-0 flex-1 bg-white">
      <div className="min-w-0 flex-1 overflow-hidden pt-px">
        <div className="flex h-[298px] flex-col leading-[10px]">
          {FILTERS.map((section) => (
            <Fragment key={section.title}>
              <div className="flex min-h-0 flex-1 items-center justify-between border-b border-[#e0dde2] pr-[4px] pl-[16px] font-bold text-[#37383e]">
                {section.title}
                <Chevron up />
              </div>
              {section.fields.map((f) => (
                <div key={f} className="ml-[14px] flex min-h-0 flex-1 border-b border-[#e0dde2]">
                  <span
                    className={`flex w-[52px] shrink-0 items-center overflow-hidden border-x border-[#d9d6db] pl-[15px] whitespace-nowrap ${
                      f === "In Rese..." ? "bg-[#dcdadd]" : "bg-[#f1eff2]"
                    }`}
                  >
                    {f}
                  </span>
                  <span className="flex items-center pl-[4px]">Any</span>
                </div>
              ))}
            </Fragment>
          ))}
        </div>
      </div>
      <VScroll thumb="h-[243px]" />
    </div>
  );
}

function RightSide() {
  return (
    <aside className="flex w-[161px] shrink-0 flex-col border-l border-[#c6c3c8] bg-[#eeecef] pt-px pr-[2px] pb-[8px]">
      <div className="flex h-[23px] shrink-0 items-center border-b border-[#dad7dc] bg-[#f2f0f3] pr-[5px] pl-[5px]">
        <Icon name="funnel" className="h-[10px] w-[10px]" />
        <h2 className="ml-[2px] font-bold text-[#33343a]">Filter</h2>
        <button className="ml-auto flex items-center gap-px text-[#36373d]">
          <Icon name="refresh" className="h-[11px] w-[11px]" />
          Refresh
        </button>
        <span className="ml-[13px] flex">
          <Pin />
        </span>
      </div>
      <div className="flex min-h-0 flex-1 flex-col gap-[5px] pt-[5px] pr-[4px] pl-[6px]">
        <section className="flex min-h-0 flex-1 flex-col border border-[#c6c3c8] bg-[#dedcdf] px-px pb-px">
          <div className="flex h-[20px] shrink-0 items-center pr-[5px] pl-[4px]">
            <Icon name="funnel" className="h-[11px] w-[11px]" />
            <label htmlFor="filter-by" className="ml-[3px] font-bold text-[#33343a]">Filter By</label>
            <div className="ml-auto flex h-[14px] w-[83px] items-center border border-[#c6c3c8] bg-white pr-[2px] pl-[4px]">
              <Icon name="funnel" className="h-[10px] w-[10px]" />
              <select id="filter-by" className="h-full min-w-0 flex-1 appearance-none bg-transparent pl-[3px] outline-none">
                <option>Advanced</option>
              </select>
              <Arrow dir="down" />
            </div>
          </div>
          <FilterGrid />
        </section>
        <section className="shrink-0 border border-[#c6c3c8] bg-[#dedcdf] px-px pb-px">
          <div className="flex h-[19px] items-center pl-[6px]">
            <Icon name="book" className="h-[10px] w-[10px]" />
            <label htmlFor="class-subject" className="ml-[3px] font-bold text-[#33343a]">Class Subject Filter</label>
          </div>
          <div className="flex h-[14px] items-center border border-[#c6c3c8] bg-white pr-[2px]">
            <select id="class-subject" className="h-full min-w-0 flex-1 appearance-none bg-transparent pl-[3px] outline-none">
              <option>(Use Default)</option>
            </select>
            <Arrow dir="down" />
          </div>
        </section>
        <section className="mt-[2px] flex h-[158px] shrink-0 flex-col border border-[#c6c3c8] bg-[#dedcdf]">
          <div className="flex h-[20px] shrink-0 items-center pr-[5px] pl-[6px]">
            <Icon name="pupil" className="h-[11px] w-[11px]" />
            <h2 className="ml-[3px] font-bold text-[#33343a]">Pupils</h2>
            <span className="ml-auto">.</span>
          </div>
          <div className="flex min-h-0 flex-1 bg-[#f2f0f3] pl-px">
            <div className="min-w-0 flex-1 overflow-hidden">
              <table className="w-full table-fixed border-separate border-spacing-0 text-left leading-[13px]">
                <thead>
                  <tr className="h-[17px]">
                    {["Forename", "Surname", "Gender"].map((h) => (
                      <th key={h} className="border-r border-b border-[#d9d6db] p-0 pl-[3px] font-normal">{h}</th>
                    ))}
                  </tr>
                </thead>
                <tbody>
                  {PUPILS.map((row, r) => (
                    <tr key={r} className={`h-[14px] ${r === 0 ? "bg-[#dcdadd]" : "bg-white"}`}>
                      {row.map((v, c) => (
                        <td key={c} className="border-r border-b border-[#dddadf] p-0 pl-[3px]">{v}</td>
                      ))}
                    </tr>
                  ))}
                </tbody>
              </table>
            </div>
            <div className="flex w-[11px] shrink-0 flex-col">
              <div className="h-[17px] border-b border-[#d9d6db]" />
              <VScroll thumb="h-[11px]" className="flex-1" />
            </div>
          </div>
        </section>
      </div>
    </aside>
  );
}

/* ---------- bottom ---------- */

function StatusBar() {
  return (
    <div className="flex h-[17px] shrink-0 items-center bg-[#27374a] pr-[6px] pl-[5px] text-white">
      <svg viewBox="0 0 10 10" className="h-[10px] w-[10px]" aria-hidden="true">
        <path d="M0 2h10v8H0z" fill="#c9ced4" />
        <path d="M2 0h1v2H2zM7 0h1v2H7zM0 2h10v2H0z" fill="#eef0f2" />
      </svg>
      <strong className="ml-[3px] font-bold">Selected Series:</strong>
      <span className="ml-[9px]">Year 11 (2024/2025) Actual Results</span>
      <button aria-label="Edit series" className="ml-[10px]">
        <Pencil className="h-[11px] w-[11px]" body="#fff" tip="#dfe3e8" />
      </button>
      <button className="ml-auto flex items-center">
        <svg viewBox="0 0 10 10" className="h-[10px] w-[10px]" aria-hidden="true">
          <circle cx="5" cy="2.500" r="2.200" fill="#c9ced4" />
          <path d="M0 10c0-6 10-6 10 0z" fill="#fff" />
        </svg>
        <span className="ml-[4px]">Office</span>
        <Arrow dir="down" className="ml-[2px]" />
      </button>
    </div>
  );
}

function Footer() {
  return (
    <footer className="relative flex h-[32px] shrink-0 items-center justify-end bg-[#fefefe] pr-[10px]">
      <svg viewBox="0 0 600 32" preserveAspectRatio="xMinYMin slice" className="absolute inset-y-0 right-0 h-full w-[600px]" aria-hidden="true">
        <path d="M2 0h598v32H14z" fill="#efecf1" />
        <path d="M2 0h8l12 32h-7z" fill="#d3d0d6" />
        <path d="M8 2l8 0 12 30h-8z" fill="#fcfbfd" />
        <path d="M18 0h48L22 14z" fill="#d8d5da" />
      </svg>
      <svg viewBox="0 0 8 12" className="absolute top-0 left-[54%] h-[12px] w-[8px] -translate-x-[2px]" aria-hidden="true">
        <path d="M.5.5v9.500l2.200-2 1.500 3.500 1.500-.7L4.200 7.500h3z" fill="#fff" stroke="#333" strokeWidth=".8" />
      </svg>
      <p className="relative text-[12px] leading-[16px] text-[#35363b]">© Copyright 2025 New Media Learning Ltd. All rights reserved.</p>
    </footer>
  );
}

export default function App() {
  return (
    <div className="flex h-screen min-h-[720px] flex-col overflow-hidden bg-[#eae8eb] font-['Noto_Sans','Open_Sans',sans-serif] text-[7px] leading-[9px] text-[#46474e]">
      <div className="shrink-0 bg-[#27374a]">
        <TitleBar />
        <Tabs />
        <Ribbon />
      </div>
      <div className="flex min-h-0 flex-1">
        <LeftSide />
        <KpiPanel />
        <RightSide />
      </div>
      <StatusBar />
      <Footer />
    </div>
  );
}
